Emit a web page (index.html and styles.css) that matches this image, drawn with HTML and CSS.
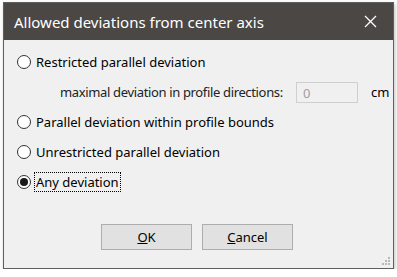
FILE: index.html
```html
<!DOCTYPE html>
<html lang="en">
<head>
  <meta charset="UTF-8">
  <title>Allowed deviations from center axis</title>
  <link rel="stylesheet" href="styles.css">
</head>
<body>
<div class="window">
  <div class="titlebar">
    <span class="title">Allowed deviations from center axis</span>
    <span class="close">
      <svg width="13" height="13" viewBox="0 0 13 13"><path d="M1 1 L12 12 M12 1 L1 12" stroke="#fff" stroke-width="1.3"/></svg>
    </span>
  </div>
  <div class="body">
    <div class="options">
      <label class="option"><span class="radio"></span><span class="label">Restricted parallel deviation</span></label>
      <div class="sub">
        <span class="sub-label">maximal deviation in profile directions:</span>
        <span class="field">0</span>
        <span class="unit">cm</span>
      </div>
      <label class="option"><span class="radio"></span><span class="label">Parallel deviation within profile bounds</span></label>
      <label class="option"><span class="radio"></span><span class="label">Unrestricted parallel deviation</span></label>
      <label class="option"><span class="radio checked"></span><span class="label focus">Any deviation</span></label>
    </div>
    <div class="buttons">
      <button class="btn"><u>O</u>K</button>
      <button class="btn"><u>C</u>ancel</button>
    </div>
    <div class="grip">
      <svg width="10" height="10" viewBox="0 0 10 10">
        <rect x="8" y="2" width="2" height="2" fill="#b8b8b8"/>
        <rect x="5" y="5" width="2" height="2" fill="#b8b8b8"/>
        <rect x="8" y="5" width="2" height="2" fill="#b8b8b8"/>
        <rect x="2" y="8" width="2" height="2" fill="#b8b8b8"/>
        <rect x="5" y="8" width="2" height="2" fill="#b8b8b8"/>
        <rect x="8" y="8" width="2" height="2" fill="#b8b8b8"/>
      </svg>
    </div>
  </div>
</div>
</body>
</html>
```

FILE: styles.css
```css
* { margin: 0; padding: 0; box-sizing: border-box; }
body {
  background: #ffffff;
  font-family: 'Noto Sans', sans-serif;
  font-size: 13px;
  color: #000;
}

/* Dialog window */
.window {
  margin: 2px 0 0 3px;
  width: 391px;
  height: 267px;
  border: 1px solid #5f5f5f;
  background: #f0f0f0;
  box-shadow: 1px 2px 4px rgba(0, 0, 0, 0.25);
  display: flex;
  flex-direction: column;
}
.titlebar {
  height: 37px;
  background: #4a4745;
  color: #fff;
  display: flex;
  align-items: center;
  justify-content: space-between;
  padding: 0 8px 0 10px;
  flex-shrink: 0;
}
.title { font-size: 15px; }
.close { display: flex; padding: 0 8px; }

.body {
  flex: 1;
  position: relative;
  display: flex;
  flex-direction: column;
  padding: 12px 0 0 13px;
}

/* Radio list */
.options {
  display: flex;
  flex-direction: column;
  gap: 10px;
}
.option {
  display: flex;
  align-items: center;
  height: 20px;
}
.radio {
  width: 14px;
  height: 14px;
  border: 1px solid #333;
  border-radius: 50%;
  background: #fff;
  margin-right: 4px;
  display: flex;
  align-items: center;
  justify-content: center;
}
.radio.checked::after {
  content: '';
  width: 8px;
  height: 8px;
  border-radius: 50%;
  background: #1a1a1a;
}
.label { padding: 0 1px; }
.label.focus { outline: 1px dotted #000; }

.sub {
  display: flex;
  align-items: center;
  height: 20px;
  padding-left: 43px;
}
.sub-label {
  color: #222;
  width: 236px;
  white-space: nowrap;
  letter-spacing: -0.35px;
}
.field {
  width: 62px;
  height: 21px;
  border: 1px solid #cfcfcf;
  background: #f0f0f0;
  color: #a0a0a0;
  padding: 1px 6px;
}
.unit { margin-left: 13px; }

/* Buttons */
.buttons {
  display: flex;
  gap: 10px;
  margin-top: 32px;
  padding-left: 84px;
}
.btn {
  width: 91px;
  height: 26px;
  background: #e1e1e1;
  border: 1px solid #adadad;
  font-family: inherit;
  font-size: 13px;
  color: #000;
}
.grip {
  position: absolute;
  right: 3px;
  bottom: 3px;
  display: flex;
}
```
